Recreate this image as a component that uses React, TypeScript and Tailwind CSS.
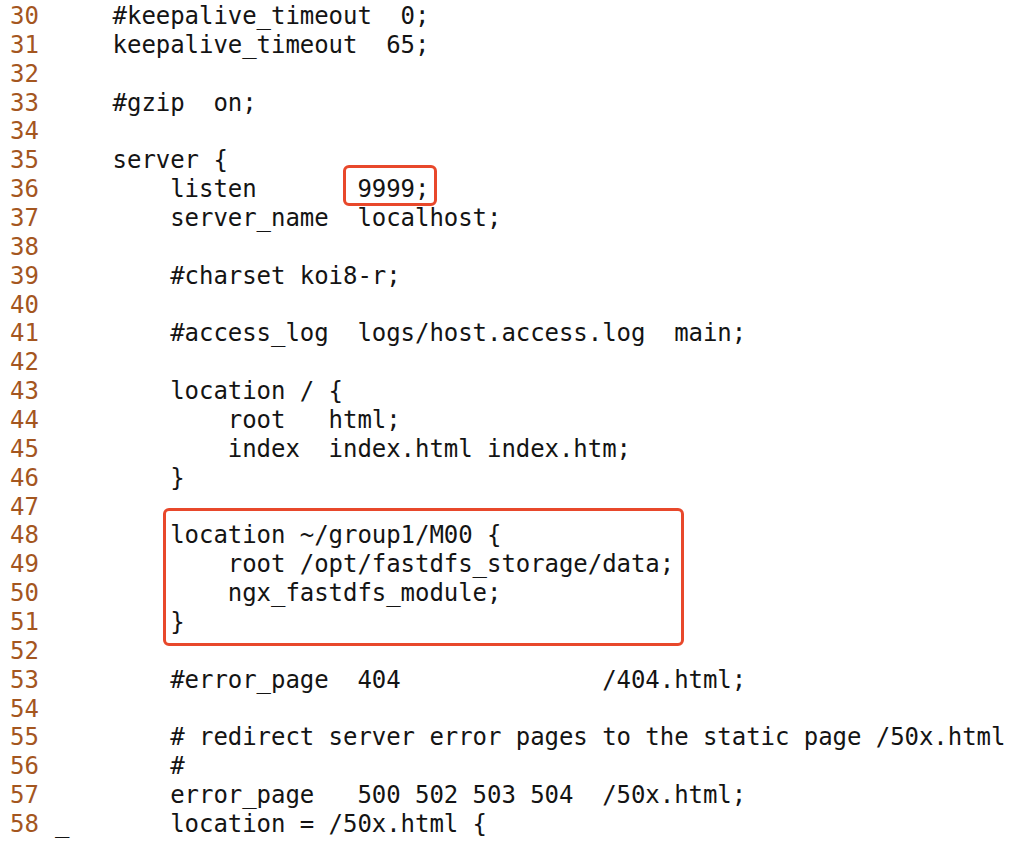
const lines: [number, string][] = [
  [30, '    #keepalive_timeout  0;'],
  [31, '    keepalive_timeout  65;'],
  [32, ''],
  [33, '    #gzip  on;'],
  [34, ''],
  [35, '    server {'],
  [36, '        listen       9999;'],
  [37, '        server_name  localhost;'],
  [38, ''],
  [39, '        #charset koi8-r;'],
  [40, ''],
  [41, '        #access_log  logs/host.access.log  main;'],
  [42, ''],
  [43, '        location / {'],
  [44, '            root   html;'],
  [45, '            index  index.html index.htm;'],
  [46, '        }'],
  [47, ''],
  [48, '        location ~/group1/M00 {'],
  [49, '            root /opt/fastdfs_storage/data;'],
  [50, '            ngx_fastdfs_module;'],
  [51, '        }'],
  [52, ''],
  [53, '        #error_page  404              /404.html;'],
  [54, ''],
  [55, '        # redirect server error pages to the static page /50x.html'],
  [56, '        #'],
  [57, '        error_page   500 502 503 504  /50x.html;'],
  [58, '_       location = /50x.html {'],
];

export default function App() {
  return (
    <div className="relative w-[1024px] h-[851px] overflow-hidden bg-white pt-[2px] font-['DejaVu_Sans_Mono',monospace] text-[24px] leading-[28.86px] text-[#141414]">
      {lines.map(([n, code]) => (
        <div key={n} className="flex h-[28.86px]">
          <span className="w-[55px] shrink-0 pl-[10px] text-[#a4561f]">{n}</span>
          <span className="whitespace-pre tracking-[-0.05px]">{code}</span>
        </div>
      ))}
      {/* red highlight boxes */}
      <div className="absolute left-[343px] top-[165px] w-[94px] h-[41px] rounded-[6px] border-[3px] border-[#e8482b]" />
      <div className="absolute left-[163px] top-[508px] w-[521px] h-[138px] rounded-[6px] border-[3px] border-[#e8482b]" />
    </div>
  );
}
